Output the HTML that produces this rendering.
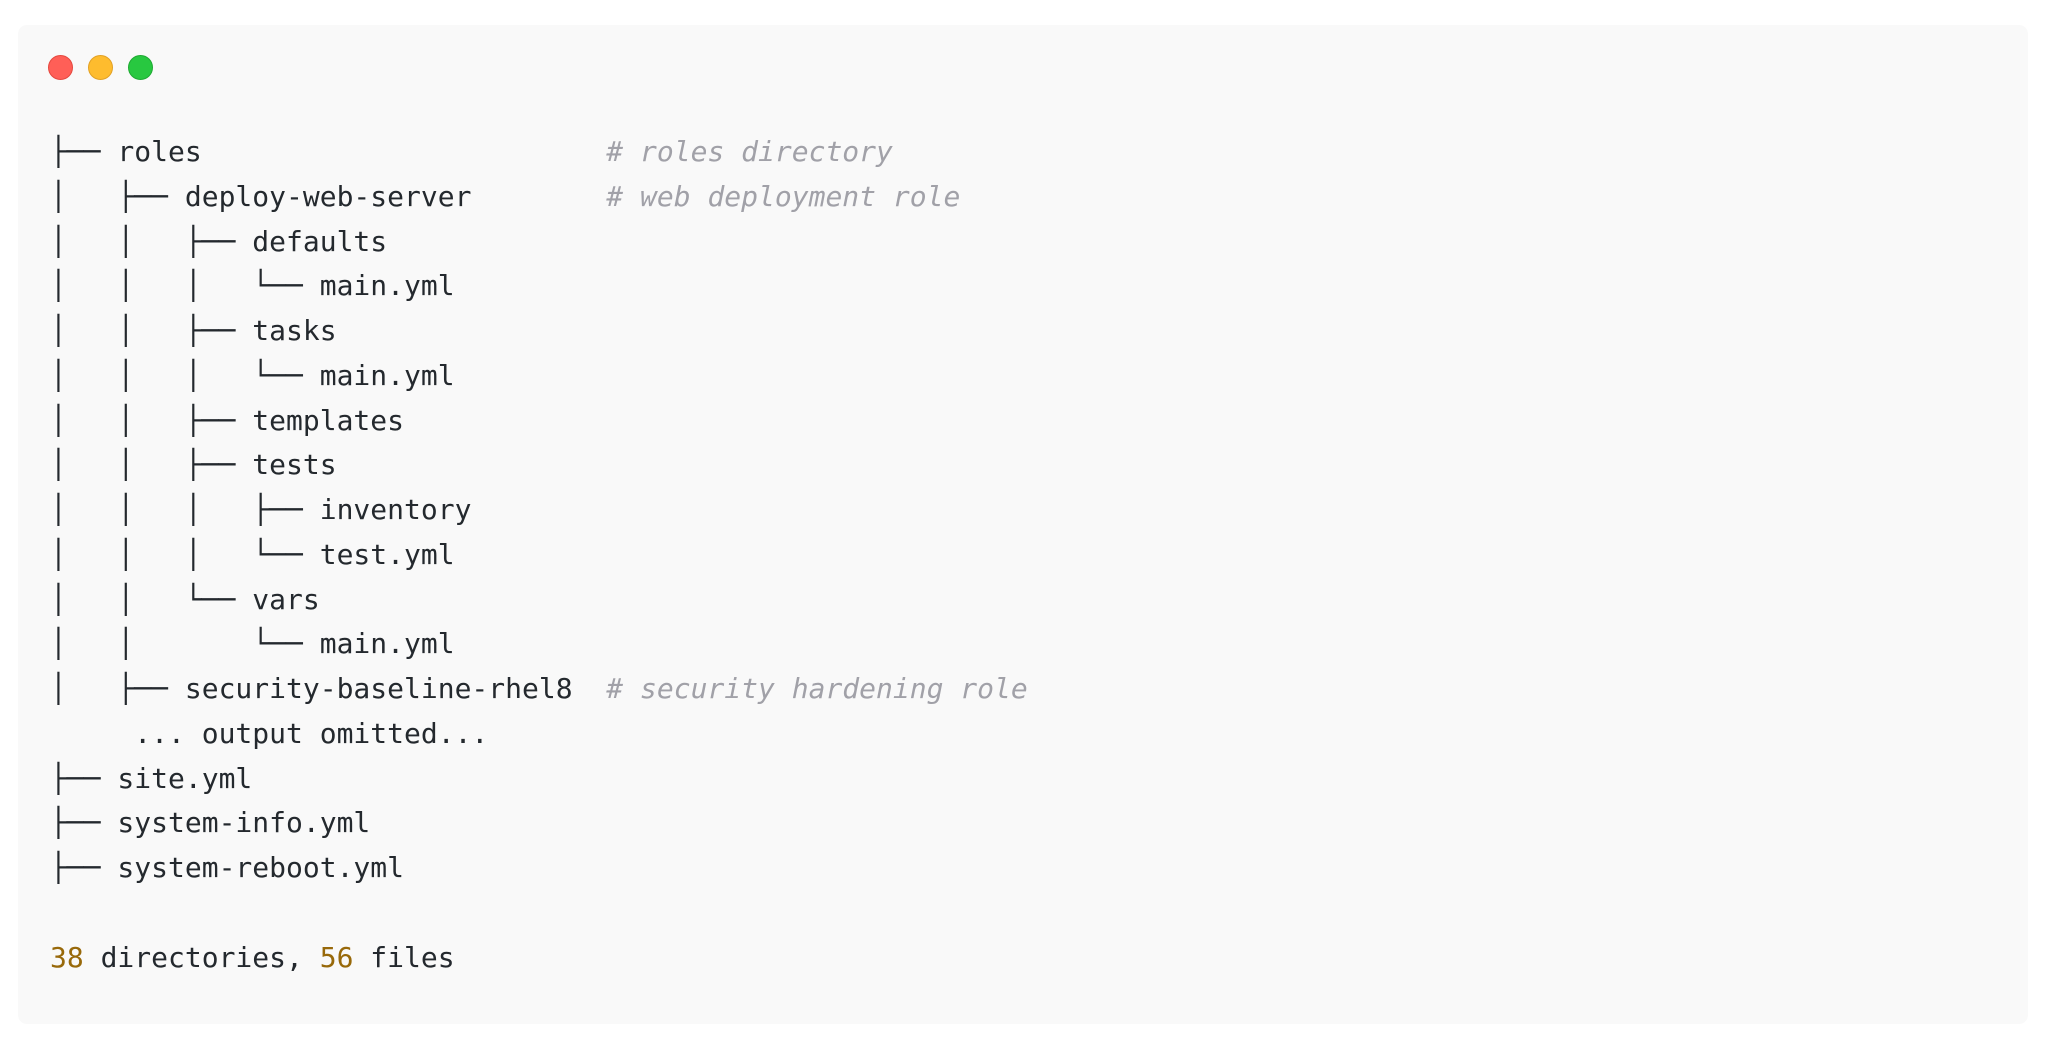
<!DOCTYPE html>
<html><head><meta charset="utf-8"><style>
html,body{margin:0;padding:0;background:#fff;width:2048px;height:1050px;overflow:hidden}
.card{position:absolute;left:18px;top:25px;width:2010px;height:999px;background:#f9f9f9;border-radius:9px}
.dot{position:absolute;top:55px;width:24px;height:24px;border-radius:50%}
pre{position:absolute;left:50px;top:130px;margin:0;font-family:"DejaVu Sans Mono","Liberation Mono",monospace;font-size:28px;line-height:44.75px;color:#24292e}
.c{color:#a1a1a8;font-style:italic}
.n{color:#98690a}
</style></head><body>
<div class="card"></div>
<div class="dot" style="left:48px;background:#ff5f57;border:1px solid #e5483f;width:23px;height:23px"></div>
<div class="dot" style="left:88px;background:#febc2e;border:1px solid #e2a124;width:23px;height:23px"></div>
<div class="dot" style="left:128px;background:#28c840;border:1px solid #1eaa32;width:23px;height:23px"></div>
<pre>├── roles                        <span class="c"># roles directory</span>
│   ├── deploy-web-server        <span class="c"># web deployment role</span>
│   │   ├── defaults
│   │   │   └── main.yml
│   │   ├── tasks
│   │   │   └── main.yml
│   │   ├── templates
│   │   ├── tests
│   │   │   ├── inventory
│   │   │   └── test.yml
│   │   └── vars
│   │       └── main.yml
│   ├── security-baseline-rhel8  <span class="c"># security hardening role</span>
     ... output omitted...
├── site.yml
├── system-info.yml
├── system-reboot.yml

<span class="n">38</span> directories, <span class="n">56</span> files</pre>
</body></html>
